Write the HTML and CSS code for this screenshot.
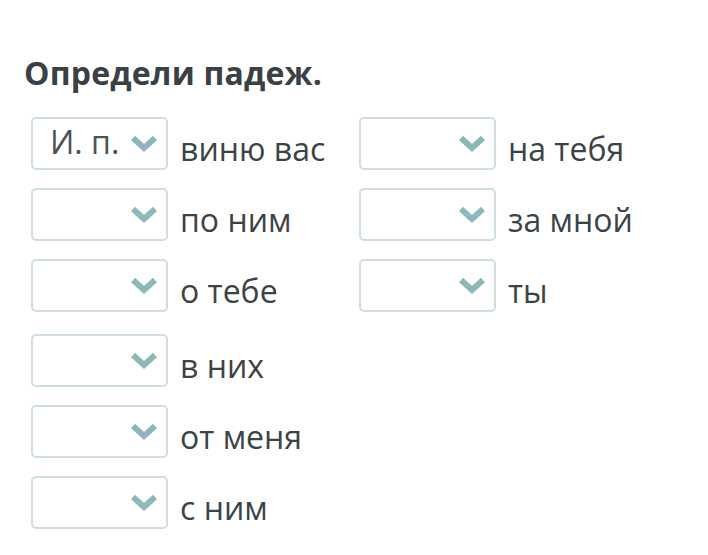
FILE: index.html
```html
<!DOCTYPE html>
<html lang="ru">
<head>
    <meta charset="UTF-8">
    <title>Определи падеж</title>
    <link rel="stylesheet" href="styles.css">
</head>
<body>
    <div class="task">
        <h1>Определи падеж.</h1>
        <div class="columns">
            <div class="col">
                <div class="row">
                    <div class="select"><span class="value">И. п.</span><svg class="chev" viewBox="0 0 28 18"><path d="M3 3 L14 13 L25 3"/></svg></div>
                    <span class="word">виню вас</span>
                </div>
                <div class="row">
                    <div class="select"><span class="value"></span><svg class="chev" viewBox="0 0 28 18"><path d="M3 3 L14 13 L25 3"/></svg></div>
                    <span class="word">по ним</span>
                </div>
                <div class="row">
                    <div class="select"><span class="value"></span><svg class="chev" viewBox="0 0 28 18"><path d="M3 3 L14 13 L25 3"/></svg></div>
                    <span class="word">о тебе</span>
                </div>
                <div class="row gap-top">
                    <div class="select"><span class="value"></span><svg class="chev" viewBox="0 0 28 18"><path d="M3 3 L14 13 L25 3"/></svg></div>
                    <span class="word">в них</span>
                </div>
                <div class="row">
                    <div class="select"><span class="value"></span><svg class="chev" viewBox="0 0 28 18"><path d="M3 3 L14 13 L25 3"/></svg></div>
                    <span class="word">от меня</span>
                </div>
                <div class="row">
                    <div class="select"><span class="value"></span><svg class="chev" viewBox="0 0 28 18"><path d="M3 3 L14 13 L25 3"/></svg></div>
                    <span class="word">с ним</span>
                </div>
            </div>
            <div class="col">
                <div class="row">
                    <div class="select"><span class="value"></span><svg class="chev" viewBox="0 0 28 18"><path d="M3 3 L14 13 L25 3"/></svg></div>
                    <span class="word">на тебя</span>
                </div>
                <div class="row">
                    <div class="select"><span class="value"></span><svg class="chev" viewBox="0 0 28 18"><path d="M3 3 L14 13 L25 3"/></svg></div>
                    <span class="word">за мной</span>
                </div>
                <div class="row">
                    <div class="select"><span class="value"></span><svg class="chev" viewBox="0 0 28 18"><path d="M3 3 L14 13 L25 3"/></svg></div>
                    <span class="word">ты</span>
                </div>
            </div>
        </div>
    </div>
</body>
</html>
```

FILE: styles.css
```css
body {
    margin: 0;
    background-color: #ffffff;
    font-family: 'Open Sans', 'Noto Sans', sans-serif;
    color: #3b4246;
}
.task {
    padding: 50px 0 0 24px;
}
h1 {
    margin: 0 0 21px 0;
    font-size: 32px;
    font-weight: 700;
    line-height: 46px;
    color: #3a4145;
    white-space: nowrap;
    letter-spacing: 0.2px;
}
.columns {
    display: flex;
    gap: 54px;
    padding-left: 7px;
}
.col {
    display: flex;
    flex-direction: column;
    gap: 18px;
    width: 274px;
    flex-shrink: 0;
}
.row {
    display: flex;
    align-items: flex-start;
    gap: 12px;
}
.row.gap-top {
    margin-top: 4px;
}
.select {
    box-sizing: border-box;
    flex-shrink: 0;
    width: 137px;
    height: 53px;
    border: 2px solid #cfdfdf;
    border-radius: 5px;
    display: flex;
    align-items: center;
    justify-content: space-between;
    padding: 0 8px 4px 17px;
}
.value {
    font-size: 32px;
    color: #4b5357;
    line-height: 1;
    white-space: nowrap;
}
.chev {
    width: 28px;
    height: 18px;
    margin-top: 4px;
    margin-left: auto;
}
.chev path {
    fill: none;
    stroke: #8cb8bb;
    stroke-width: 6;
    stroke-linecap: butt;
    stroke-linejoin: miter;
}
.word {
    font-size: 32px;
    line-height: 42px;
    margin-top: 11px;
    color: #3c4347;
    white-space: nowrap;
}
```
